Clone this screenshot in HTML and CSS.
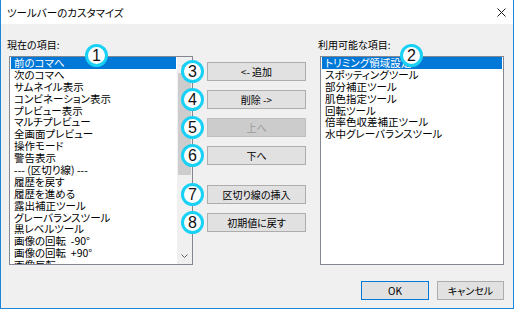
FILE: index.html
```html
<!DOCTYPE html>
<html lang="ja">
<head>
<meta charset="utf-8">
<link rel="stylesheet" href="styles.css">
</head>
<body>
<div class="window">
  <div class="titlebar">
    <span class="title">ツールバーのカスタマイズ</span>
    <svg class="close" width="9" height="9" viewBox="0 0 9 9"><path d="M0.5 0.5L8.5 8.5M8.5 0.5L0.5 8.5" stroke="#1a1a1a" stroke-width="1"/></svg>
  </div>
  <div class="content">
    <div class="columns">
      <div class="col">
        <div class="label">現在の項目:</div>
        <div class="listwrap">
          <div class="list">
            <div class="items">
              <div class="item sel">前のコマへ</div>
              <div class="item">次のコマへ</div>
              <div class="item">サムネイル表示</div>
              <div class="item">コンビネーション表示</div>
              <div class="item">プレビュー表示</div>
              <div class="item">マルチプレビュー</div>
              <div class="item">全画面プレビュー</div>
              <div class="item">操作モード</div>
              <div class="item">警告表示</div>
              <div class="item">--- (区切り線) ---</div>
              <div class="item">履歴を戻す</div>
              <div class="item">履歴を進める</div>
              <div class="item">露出補正ツール</div>
              <div class="item">グレーバランスツール</div>
              <div class="item">黒レベルツール</div>
              <div class="item">画像の回転&nbsp; -90°</div>
              <div class="item">画像の回転&nbsp; +90°</div>
              <div class="item">画像反転</div>
            </div>
            <div class="scrollbar">
              <div class="arrow"><svg width="7" height="4" viewBox="0 0 7 4"><path d="M0.5 3.5L3.5 0.5L6.5 3.5" fill="none" stroke="#a0a0a0" stroke-width="1"/></svg></div>
              <div class="track"><div class="thumb"></div></div>
              <div class="arrow"><svg width="7" height="4" viewBox="0 0 7 4"><path d="M0.5 0.5L3.5 3.5L6.5 0.5" fill="none" stroke="#606060" stroke-width="1"/></svg></div>
            </div>
          </div>
          <span class="badge b-list1">1</span>
        </div>
      </div>
      <div class="buttons">
        <div class="btnrow"><button class="btn">&lt;- 追加</button><span class="badge b-btn">3</span></div>
        <div class="btnrow"><button class="btn">削除 -&gt;</button><span class="badge b-btn">4</span></div>
        <div class="btnrow"><button class="btn disabled">上へ</button><span class="badge b-btn">5</span></div>
        <div class="btnrow"><button class="btn">下へ</button><span class="badge b-btn">6</span></div>
        <div class="btnrow spaced"><button class="btn">区切り線の挿入</button><span class="badge b-btn">7</span></div>
        <div class="btnrow"><button class="btn">初期値に戻す</button><span class="badge b-btn">8</span></div>
      </div>
      <div class="col">
        <div class="label">利用可能な項目:</div>
        <div class="listwrap">
          <div class="list">
            <div class="items">
              <div class="item sel">トリミング領域設定</div>
              <div class="item">スポッティングツール</div>
              <div class="item">部分補正ツール</div>
              <div class="item">肌色指定ツール</div>
              <div class="item">回転ツール</div>
              <div class="item">倍率色収差補正ツール</div>
              <div class="item">水中グレーバランスツール</div>
            </div>
          </div>
          <span class="badge b-list2">2</span>
        </div>
      </div>
    </div>
    <div class="footer">
      <button class="btn dlg default">OK</button>
      <button class="btn dlg">キャンセル</button>
    </div>
  </div>
</div>
</body>
</html>
```
FILE: styles.css
```css
* { box-sizing: border-box; }
html, body { margin: 0; padding: 0; background: #f0f0f0; }
body {
  font-family: "Noto Sans CJK JP", "Noto Sans", sans-serif;
  font-feature-settings: "palt";
  font-size: 10px;
  color: #000;
}
.window {
  position: relative;
  width: 514px;
  height: 309px;
  background: #f0f0f0;
  border-left: 1px solid #1c86d8;
  border-right: 1px solid #1c86d8;
  border-bottom: 1px solid #1c86d8;
  display: flex;
  flex-direction: column;
}
.titlebar {
  height: 24px;
  background: #fff;
  display: flex;
  align-items: center;
  justify-content: space-between;
  padding: 0 7px 0 6px;
}
.title { font-size: 10.5px; line-height: 12px; padding-top: 2px; }
.content {
  flex: 1;
  display: flex;
  flex-direction: column;
  padding: 15px 8px 0 8px;
}
.columns {
  display: flex;
  gap: 14px;
}
.col { width: 184px; display: flex; flex-direction: column; }
.label { height: 17px; line-height: 12px; margin-left: -2px; }
.listwrap { position: relative; }
.list {
  height: 209px;
  background: #fff;
  border: 1px solid #828790;
  display: flex;
  overflow: hidden;
}
.items { flex: 1; overflow: hidden; }
.item {
  height: 11.9px;
  line-height: 11.9px;
  font-size: 10.5px;
  padding-left: 3px;
  white-space: nowrap;
  margin: 0 1px;
}
.item.sel { background: #0078d7; color: #fff; }
.scrollbar {
  width: 15px;
  background: #f0f0f0;
  display: flex;
  flex-direction: column;
}
.arrow { height: 16px; display: flex; align-items: center; justify-content: center; }
.track { flex: 1; }
.thumb { height: 102px; background: #cdcdcd; margin: 0 1px; }
.buttons {
  width: 99px;
  padding-top: 23px;
  display: flex;
  flex-direction: column;
  gap: 9px;
}
.btnrow { position: relative; height: 19px; }
.btnrow.spaced { margin-top: 11px; }
.btn {
  font-family: inherit;
  font-feature-settings: "palt";
  font-size: 10px;
  color: #000;
  width: 100%;
  height: 19px;
  padding: 0;
  line-height: 17px;
  background: #e1e1e1;
  border: 1px solid #adadad;
  border-radius: 0;
  margin: 0;
}
.btn.disabled { background: #cccccc; border-color: #bfbfbf; color: #9b9b9b; }
.footer {
  display: flex;
  justify-content: flex-end;
  gap: 8px;
  margin-top: 16px;
  padding-right: 1px;
}
.btn.dlg { width: 68px; }
.btn.dlg + .btn.dlg { width: 67px; }
.btn.default { border-color: #0078d7; }
.badge {
  position: absolute;
  width: 23px;
  height: 23px;
  border: 3px solid #19d0f5;
  border-radius: 50%;
  background: #fff;
  font-family: "Liberation Sans", Arial, sans-serif;
  font-size: 16px;
  line-height: 17px;
  text-align: center;
  color: #111;
}
.b-btn { left: -26px; top: -2px; }
.b-list1 { left: 76px; top: -12px; }
.b-list2 { left: 80px; top: -12px; }
```
